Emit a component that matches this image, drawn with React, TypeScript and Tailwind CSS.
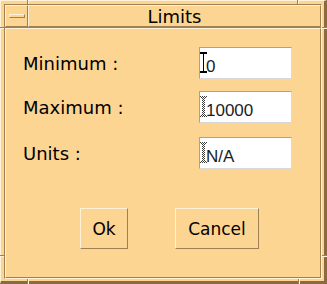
const rows = [
  { label: "Minimum :", value: "0", active: true, mt: "mt-[18px]" },
  { label: "Maximum :", value: "10000", active: false, mt: "mt-[12px]" },
  { label: "Units :", value: "N/A", active: false, mt: "mt-[14px]" },
];

function IBeam({ active }: { active: boolean }) {
  // text cursor: solid when focused, stippled when not
  return (
    <svg width="7" height="21" viewBox="0 0 7 21" shapeRendering="crispEdges">
      <defs>
        <pattern id="stip" width="2" height="2" patternUnits="userSpaceOnUse">
          <rect width="1" height="1" fill="#3a3a3a" />
          <rect x="1" y="1" width="1" height="1" fill="#3a3a3a" />
        </pattern>
      </defs>
      {active ? (
        <path d="M0 0h7v2H4v17h3v2H0v-2h3V2H0z" fill="#000" />
      ) : (
        <path d="M0 0h7v2H5v17h2v2H0v-2h2V2H0z" fill="url(#stip)" />
      )}
    </svg>
  );
}

function Notch({ pos }: { pos: string }) {
  return <span className={`absolute ${pos}`} />;
}

export default function App() {
  return (
    <div className="relative w-[327px] h-[284px] flex bg-[#fdd593] border-t border-l border-t-[#fff2d6] border-l-[#fff2d6] border-r-[3px] border-b-[3px] border-r-[#8a6b41] border-b-[#8a6b41] pt-[3px] pl-[3px] pr-[2px] pb-[2px] font-['DejaVu_Sans',sans-serif] text-black">
      {/* frame corner notches */}
      <Notch pos="left-[26px] top-[-1px] w-px h-[4px] bg-[#9e8052]" />
      <Notch pos="left-[27px] top-[-1px] w-px h-[4px] bg-[#fff2d6]" />
      <Notch pos="left-[296px] top-[-1px] w-px h-[4px] bg-[#9e8052]" />
      <Notch pos="left-[297px] top-[-1px] w-px h-[4px] bg-[#fff2d6]" />
      <Notch pos="left-[26px] top-[278px] w-px h-[5px] bg-[#9e8052]" />
      <Notch pos="left-[27px] top-[278px] w-px h-[5px] bg-[#fff2d6]" />
      <Notch pos="left-[297px] top-[278px] w-px h-[5px] bg-[#9e8052]" />
      <Notch pos="left-[298px] top-[278px] w-px h-[5px] bg-[#fff2d6]" />
      <Notch pos="left-[-1px] top-[26px] w-[4px] h-px bg-[#9e8052]" />
      <Notch pos="left-[-1px] top-[27px] w-[4px] h-px bg-[#fff2d6]" />
      <Notch pos="left-[-1px] top-[254px] w-[4px] h-px bg-[#9e8052]" />
      <Notch pos="left-[-1px] top-[255px] w-[4px] h-px bg-[#fff2d6]" />
      <Notch pos="left-[321px] top-[26px] w-[5px] h-px bg-[#9e8052]" />
      <Notch pos="left-[321px] top-[27px] w-[5px] h-px bg-[#fff2d6]" />
      <Notch pos="left-[321px] top-[254px] w-[5px] h-px bg-[#9e8052]" />
      <Notch pos="left-[321px] top-[255px] w-[5px] h-px bg-[#fff2d6]" />

      <div className="flex-1 flex flex-col border border-t-[#9e8052] border-l-[#9e8052] border-r-[#fff2d6] border-b-[#fff2d6]">
        {/* title bar */}
        <div className="h-[22px] flex">
          <div className="w-[23px] flex items-center pl-[3px] border border-t-[#fff2d6] border-l-[#fff2d6] border-r-[#9e8052] border-b-[#9e8052]">
            <div className="w-[16px] h-[4px] border border-t-[#fff2d6] border-l-[#fff2d6] border-r-[#9e8052] border-b-[#9e8052]" />
          </div>
          <div className="flex-1 flex items-center justify-center text-[18px] leading-[21px] border border-t-[#fff2d6] border-l-[#fff2d6] border-r-[#9e8052] border-b-[#9e8052]">
            Limits
          </div>
        </div>
        <div className="h-px bg-[#9e8052]" />

        {/* dialog body */}
        <div className="flex-1 flex flex-col border border-t-[#fff2d6] border-l-[#fff2d6] border-r-[#9e8052] border-b-[#9e8052]">
          {rows.map((r) => (
            <div key={r.label} className={`${r.mt} flex items-center pl-[17px]`}>
              <span className="w-[176px] text-[18px] leading-[21px]">{r.label}</span>
              <div className="relative w-[93px] h-[32px] bg-white border border-t-[#a3a3a3] border-l-[#a3a3a3] border-r-[#d9d9d9] border-b-[#d9d9d9]">
                <span className="absolute left-0 top-[4px] flex">
                  <IBeam active={r.active} />
                </span>
                <div className="pl-[6px] pt-[9px] text-[17px] leading-[19px] text-[#1c1c1c] font-['Liberation_Sans',sans-serif]">
                  {r.value}
                </div>
              </div>
            </div>
          ))}

          <div className="mt-[39px] flex pl-[74px]">
            <button className="w-[48px] h-[41px] flex items-center justify-center text-[17px] leading-[20px] border border-t-[#fff2d6] border-l-[#fff2d6] border-r-[#9e8052] border-b-[#9e8052]">
              Ok
            </button>
            <button className="ml-[47px] w-[84px] h-[41px] flex items-center justify-center text-[17px] leading-[20px] border border-t-[#fff2d6] border-l-[#fff2d6] border-r-[#9e8052] border-b-[#9e8052]">
              Cancel
            </button>
          </div>
        </div>
      </div>
    </div>
  );
}
